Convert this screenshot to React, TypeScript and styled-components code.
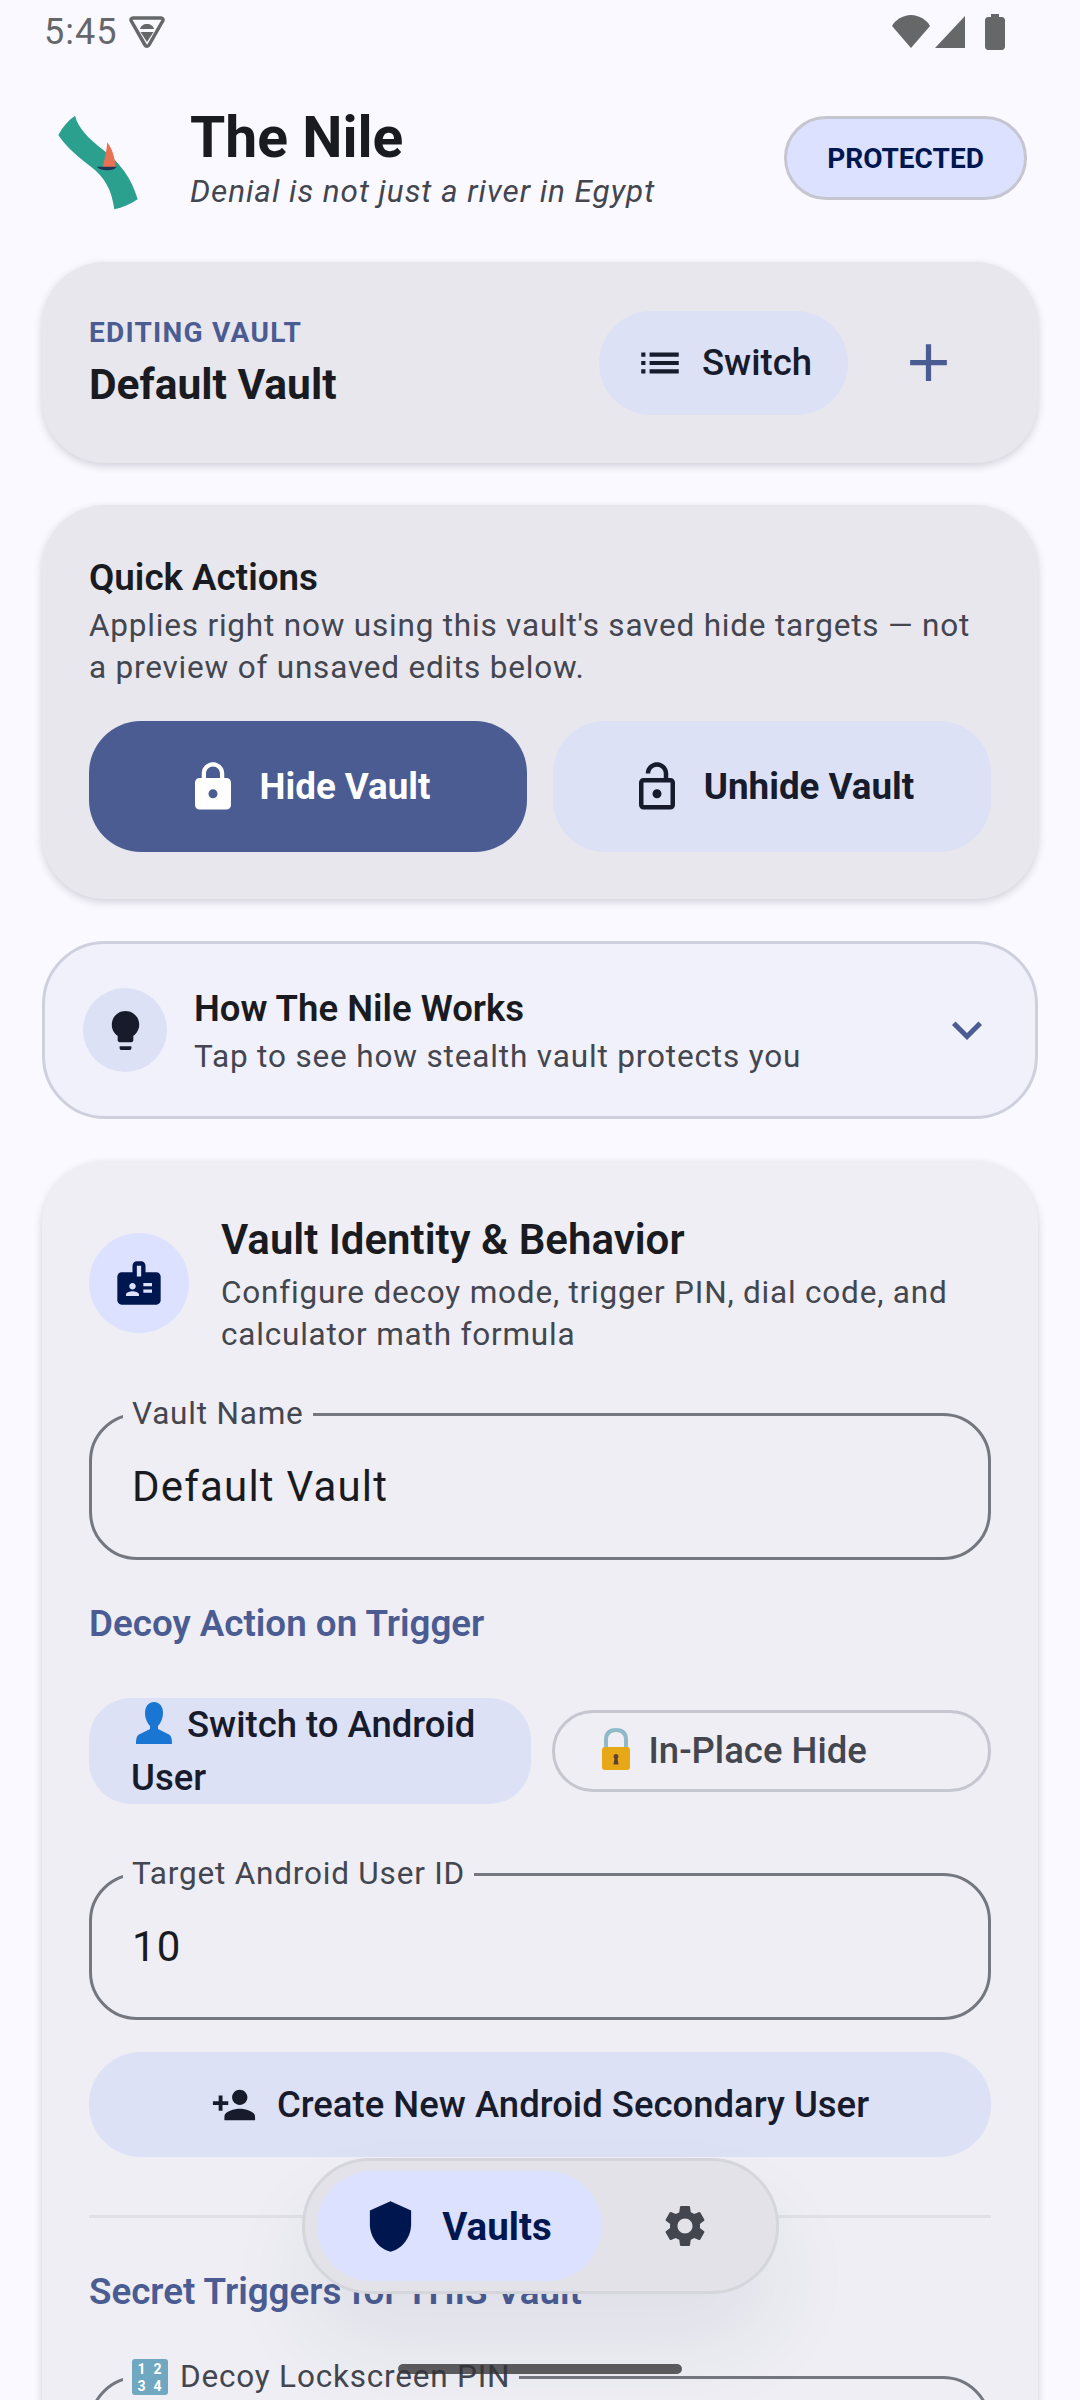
import React from "react";
import styled, { createGlobalStyle } from "styled-components";
import {
  MdAdd,
  MdBadge,
  MdExpandMore,
  MdLightbulb,
  MdList,
  MdLock,
  MdOutlineLockOpen,
  MdPersonAdd,
  MdSettings,
} from "react-icons/md";

const GlobalStyles = createGlobalStyle`
  html, body {
    margin: 0;
    padding: 0;
    background: #faf9ff;
  }
  body {
    font-family: Roboto, "Noto Sans", sans-serif;
    color: #1a1b21;
  }
  * {
    box-sizing: border-box;
  }
`;

const Screen = styled.main`
  position: relative;
  width: 1080px;
  height: 2400px;
  overflow: hidden;
  background: #faf9ff;
`;

const StatusBar = styled.div`
  display: flex;
  align-items: center;
  justify-content: space-between;
  height: 64px;
  padding: 0 75px 0 44px;
  color: #666769;
  font-size: 36px;
  letter-spacing: 1px;
`;

const StatusGroup = styled.div`
  display: flex;
  align-items: center;
  gap: 12px;
`;

const SignalGroup = styled.div`
  display: flex;
  align-items: center;
  gap: 5px;
`;

const Battery = styled.svg`
  margin-left: 15px;
`;

const Header = styled.header`
  display: flex;
  align-items: center;
  height: 96px;
  margin-top: 46px;
  padding: 0 53px 0 47px;
`;

const Logo = styled.svg`
  width: 130px;
  height: 130px;
  margin: 0 30px 6px -17px;
  flex: none;
`;

const HeaderText = styled.div`
  flex: 1;
`;

const AppTitle = styled.h1`
  margin: 0;
  font-size: 57px;
  line-height: 64px;
  font-weight: 700;
`;

const Tagline = styled.div`
  margin-top: 3px;
  font-size: 31.5px;
  line-height: 38px;
  font-style: italic;
  letter-spacing: 0.95px;
  color: #44464f;
`;

const StatusPill = styled.div`
  display: flex;
  align-items: center;
  justify-content: center;
  width: 243px;
  height: 84px;
  border: 3px solid #c5c6d0;
  border-radius: 42px;
  background: #dce1ff;
  color: #00164e;
  font-size: 28px;
  font-weight: 700;
`;

const Stack = styled.div`
  display: flex;
  flex-direction: column;
  gap: 42px;
  margin-top: 56px;
  padding: 0 42px;
`;

const Card = styled.section`
  border-radius: 63px;
  background: #e8e7ee;
  padding: 0 47px;
  box-shadow: 0 3px 8px rgba(30, 30, 50, 0.18);
`;

const VaultBar = styled(Card)`
  display: flex;
  align-items: center;
  height: 201px;
`;

const VaultInfo = styled.div`
  flex: 1;
`;

const Eyebrow = styled.div`
  font-size: 28px;
  line-height: 36px;
  font-weight: 700;
  letter-spacing: 1.25px;
  color: #4a5c92;
`;

const VaultName = styled.div`
  margin-top: 8px;
  font-size: 42.5px;
  line-height: 52px;
  font-weight: 700;
`;

const SwitchButton = styled.div`
  display: flex;
  align-items: center;
  justify-content: center;
  gap: 17px;
  width: 249px;
  height: 104px;
  border-radius: 52px;
  background: #dde1f6;
  color: #171b2c;
  font-size: 36.5px;
  font-weight: 500;
`;

const PlusButton = styled.div`
  display: flex;
  align-items: center;
  justify-content: center;
  width: 126px;
  height: 104px;
  margin-left: 17px;
  color: #4a5c92;
`;

const QuickCard = styled(Card)`
  height: 394px;
  padding-top: 51px;
`;

const CardTitle = styled.h2`
  margin: 0;
  font-size: 36.75px;
  line-height: 44px;
  font-weight: 600;
`;

const BodyText = styled.p`
  margin: 5px 0 0;
  font-size: 31.5px;
  line-height: 42px;
  letter-spacing: 0.8px;
  color: #44464f;
`;

const ActionRow = styled.div`
  display: flex;
  gap: 26px;
  margin-top: 32px;
`;

const ActionButton = styled.div<{ $filled?: boolean }>`
  display: flex;
  flex: 1;
  align-items: center;
  justify-content: center;
  gap: 20px;
  height: 131px;
  border-radius: 52px;
  background: ${(p) => (p.$filled ? "#4a5c92" : "#dde1f6")};
  color: ${(p) => (p.$filled ? "#ffffff" : "#171b2c")};
  font-size: 36.75px;
  font-weight: 700;
`;

const HowCard = styled.section`
  display: flex;
  align-items: center;
  height: 178px;
  padding: 0 38px;
  border: 3px solid #ced0de;
  border-radius: 63px;
  background: #f0f1fb;
`;

const IconCircle = styled.div<{ $size: number; $tone: string }>`
  display: flex;
  flex: none;
  align-items: center;
  justify-content: center;
  width: ${(p) => p.$size}px;
  height: ${(p) => p.$size}px;
  border-radius: 50%;
  background: ${(p) => p.$tone};
`;

const BadgeCircle = styled(IconCircle)`
  margin-bottom: 3px;
`;

const HowText = styled.div`
  flex: 1;
  margin: 4px 0 0 27px;
`;

const HowTitle = styled.div`
  font-size: 36.5px;
  line-height: 46px;
  font-weight: 600;
`;

const HowSub = styled.div`
  margin-top: 4px;
  font-size: 31.5px;
  line-height: 42px;
  letter-spacing: 0.85px;
  color: #44464f;
`;

const Chevron = styled.div`
  display: flex;
  color: #4a5c92;
`;

const FormCard = styled(Card)`
  background: #eeeef4;
  padding-top: 52px;
  padding-bottom: 60px;
`;

const FormHeader = styled.div`
  display: flex;
  align-items: center;
  gap: 32px;
`;

const FormTitle = styled.h2`
  margin: 0;
  font-size: 42px;
  line-height: 54px;
  font-weight: 600;
`;

const FormSub = styled.p`
  margin: 5px 0 0;
  font-size: 31.5px;
  line-height: 42px;
  letter-spacing: 0.8px;
  color: #44464f;
`;

const Field = styled.fieldset<{ $top: number }>`
  display: flex;
  align-items: center;
  height: 164px;
  margin: ${(p) => p.$top}px 0 0;
  padding: 0 40px 16px;
  border: 3px solid #757780;
  border-radius: 48px;
`;

const FieldLabel = styled.legend`
  display: flex;
  align-items: center;
  gap: 12px;
  margin-left: -9px;
  padding: 0 9px;
  font-size: 31.5px;
  line-height: 36px;
  letter-spacing: 0.8px;
  color: #44464f;
`;

const FieldValue = styled.div`
  font-size: 42px;
  line-height: 52px;
  letter-spacing: 1.2px;
`;

const SectionHeading = styled.h3<{ $top: number }>`
  margin: ${(p) => p.$top}px 0 0;
  font-size: 36.75px;
  line-height: 44px;
  font-weight: 600;
  color: #4a5c92;
`;

const ChipRow = styled.div`
  display: flex;
  align-items: center;
  gap: 21px;
  margin-top: 52px;
`;

const Chip = styled.div<{ $selected?: boolean }>`
  flex: 1;
  padding: ${(p) => (p.$selected ? "0 42px" : "0 38px")};
  border: ${(p) => (p.$selected ? "none" : "3px solid #c5c6d0")};
  border-radius: 42px;
  background: ${(p) => (p.$selected ? "#dde1f6" : "transparent")};
  color: ${(p) => (p.$selected ? "#171b2c" : "#44464f")};
  font-size: 36.5px;
  font-weight: 500;
  line-height: ${(p) => (p.$selected ? "53px" : "76px")};
`;

const EmojiIcon = styled.svg`
  width: 42px;
  height: 42px;
  margin: 0 12px 0 2px;
  vertical-align: -7px;
`;

const WideButton = styled.div`
  display: flex;
  align-items: center;
  justify-content: center;
  gap: 20px;
  height: 105px;
  margin-top: 32px;
  border-radius: 52px;
  background: #dde1f6;
  color: #171b2c;
  font-size: 36.5px;
  font-weight: 500;
`;

const Divider = styled.hr`
  height: 3px;
  margin: 58px 0 0;
  border: none;
  background: #e0e0e8;
`;

const BottomNav = styled.nav`
  position: absolute;
  left: 302px;
  top: 2158px;
  display: flex;
  align-items: center;
  width: 477px;
  height: 136px;
  padding: 0 12px;
  border: 3px solid #d5d5dc;
  border-radius: 68px;
  background: #e2e2e8;
  box-shadow: 0 50px 90px rgba(40, 40, 80, 0.07);
`;

const NavActive = styled.div`
  display: flex;
  align-items: center;
  justify-content: center;
  gap: 24px;
  width: 285px;
  height: 110px;
  padding-right: 4px;
  border-radius: 55px;
  background: #dce1ff;
  color: #00164e;
  font-size: 38.5px;
  font-weight: 700;
`;

const NavIdle = styled.div`
  display: flex;
  flex: 1;
  justify-content: center;
  padding-left: 4px;
  color: #44464f;
`;

const HomeBar = styled.div`
  position: absolute;
  left: 398px;
  top: 2364px;
  width: 284px;
  height: 10px;
  border-radius: 5px;
  background: rgba(50, 50, 52, 0.78);
`;

function VpnKey() {
  return (
    <svg width="36" height="34" viewBox="0 0 36 34" fill="none">
      <path d="M4 3h28c1.6 0 2.5 1.6 1.7 3L20 30c-.9 1.5-3.1 1.5-4 0L2.3 6C1.5 4.6 2.4 3 4 3z" stroke="#666769" strokeWidth="3.5" />
      <path d="M11 14c.6-3 3.5-5 7-5s6.4 2 7 5z" fill="#666769" />
      <path d="M11.5 17h13L18 27z" fill="#666769" />
    </svg>
  );
}

function StatusIcons() {
  return (
    <SignalGroup>
      <svg width="38" height="34" viewBox="0 0 38 34">
        <path d="M0 11C3 5 11 0 19 0s16 5 19 11L19 33z" fill="#666769" />
      </svg>
      <svg width="30" height="34" viewBox="0 0 30 34">
        <path d="M30 1v32H0z" fill="#666769" />
      </svg>
      <Battery width="20" height="36" viewBox="0 0 20 36">
        <path d="M6 0h8v3h3c1.5 0 3 1.5 3 3v27c0 1.5-1.5 3-3 3H3c-1.5 0-3-1.5-3-3V6c0-1.5 1.5-3 3-3h3z" fill="#666769" />
      </Battery>
    </SignalGroup>
  );
}

function NileLogo() {
  return (
    <Logo viewBox="0 0 390 390">
      <path
        d="M135 77C145 115 175 145 220 180C270 218 305 265 323 328C300 343 278 353 253 358C245 300 225 262 180 228C140 198 108 170 85 135C97 112 113 92 135 77z"
        fill="#2ca08e"
      />
      <path d="M232 157C247 178 256 205 256 231H218C224 208 230 182 232 157z" fill="#e97254" />
      <path d="M200 230H260C252 244 212 244 200 230z" fill="#1d3557" />
    </Logo>
  );
}

function ShieldIcon() {
  return (
    <svg width="55" height="55" viewBox="0 0 24 24">
      <path d="M12 1 3 5v6c0 5.55 3.84 10.74 9 12 5.16-1.26 9-6.45 9-12V5z" fill="currentColor" />
    </svg>
  );
}

function PersonEmoji() {
  return (
    <EmojiIcon viewBox="0 0 42 42">
      <path d="M21 0c6 0 9 5 9 11 0 6-3 11-5 13v3l10 5c3 1 4 4 4 10H3c0-6 1-9 4-10l10-5v-3c-2-2-5-7-5-13 0-6 3-11 9-11z" fill="#1976d2" />
    </EmojiIcon>
  );
}

function LockEmoji() {
  return (
    <EmojiIcon viewBox="0 0 42 42">
      <path d="M11 22V12C11 5 15 2 21 2s10 3 10 10v10" fill="none" stroke="#8fb8c8" strokeWidth="4" />
      <rect x="7" y="19" width="28" height="23" rx="3" fill="#e6a817" />
      <path d="M21 26a2.5 2.5 0 0 1 1.5 4.5l1 6h-5l1-6A2.5 2.5 0 0 1 21 26z" fill="#5d4037" />
    </EmojiIcon>
  );
}

function NumbersEmoji() {
  return (
    <svg width="36" height="36" viewBox="0 0 36 36">
      <rect width="36" height="36" rx="3" fill="#6fa8c0" />
      <g fill="#fff" fontFamily="Roboto, sans-serif" fontSize="14" fontWeight="700" textAnchor="middle">
        <text x="10" y="15">1</text>
        <text x="26" y="15">2</text>
        <text x="10" y="32">3</text>
        <text x="26" y="32">4</text>
      </g>
    </svg>
  );
}

export default function App() {
  return (
    <Screen>
      <GlobalStyles />
      <StatusBar>
        <StatusGroup>
          5:45
          <VpnKey />
        </StatusGroup>
        <StatusIcons />
      </StatusBar>

      <Header>
        <NileLogo />
        <HeaderText>
          <AppTitle>The Nile</AppTitle>
          <Tagline>Denial is not just a river in Egypt</Tagline>
        </HeaderText>
        <StatusPill>PROTECTED</StatusPill>
      </Header>

      <Stack>
        <VaultBar>
          <VaultInfo>
            <Eyebrow>EDITING VAULT</Eyebrow>
            <VaultName>Default Vault</VaultName>
          </VaultInfo>
          <SwitchButton>
            <MdList size={50} />
            Switch
          </SwitchButton>
          <PlusButton>
            <MdAdd size={63} />
          </PlusButton>
        </VaultBar>

        <QuickCard>
          <CardTitle>Quick Actions</CardTitle>
          <BodyText>
            Applies right now using this vault's saved hide targets — not a preview of unsaved edits below.
          </BodyText>
          <ActionRow>
            <ActionButton $filled>
              <MdLock size={54} />
              Hide Vault
            </ActionButton>
            <ActionButton>
              <MdOutlineLockOpen size={54} />
              Unhide Vault
            </ActionButton>
          </ActionRow>
        </QuickCard>

        <HowCard>
          <IconCircle $size={84} $tone="#dde1f6">
            <MdLightbulb size={47} color="#171b2c" />
          </IconCircle>
          <HowText>
            <HowTitle>How The Nile Works</HowTitle>
            <HowSub>Tap to see how stealth vault protects you</HowSub>
          </HowText>
          <Chevron>
            <MdExpandMore size={60} />
          </Chevron>
        </HowCard>

        <FormCard>
          <FormHeader>
            <BadgeCircle $size={100} $tone="#dce1ff">
              <MdBadge size={52} color="#00164e" />
            </BadgeCircle>
            <div>
              <FormTitle>Vault Identity &amp; Behavior</FormTitle>
              <FormSub>Configure decoy mode, trigger PIN, dial code, and calculator math formula</FormSub>
            </div>
          </FormHeader>

          <Field $top={40}>
            <FieldLabel>Vault Name</FieldLabel>
            <FieldValue>Default Vault</FieldValue>
          </Field>

          <SectionHeading $top={42}>Decoy Action on Trigger</SectionHeading>

          <ChipRow>
            <Chip $selected>
              <PersonEmoji />
              Switch to Android User
            </Chip>
            <Chip>
              <LockEmoji />
              In-Place Hide
            </Chip>
          </ChipRow>

          <Field $top={52}>
            <FieldLabel>Target Android User ID</FieldLabel>
            <FieldValue>10</FieldValue>
          </Field>

          <WideButton>
            <MdPersonAdd size={46} />
            Create New Android Secondary User
          </WideButton>

          <Divider />

          <SectionHeading $top={52}>Secret Triggers for THIS Vault</SectionHeading>

          <Field $top={45}>
            <FieldLabel>
              <NumbersEmoji />
              Decoy Lockscreen PIN
            </FieldLabel>
          </Field>
        </FormCard>
      </Stack>

      <BottomNav>
        <NavActive>
          <ShieldIcon />
          Vaults
        </NavActive>
        <NavIdle>
          <MdSettings size={50} />
        </NavIdle>
      </BottomNav>
      <HomeBar />
    </Screen>
  );
}
